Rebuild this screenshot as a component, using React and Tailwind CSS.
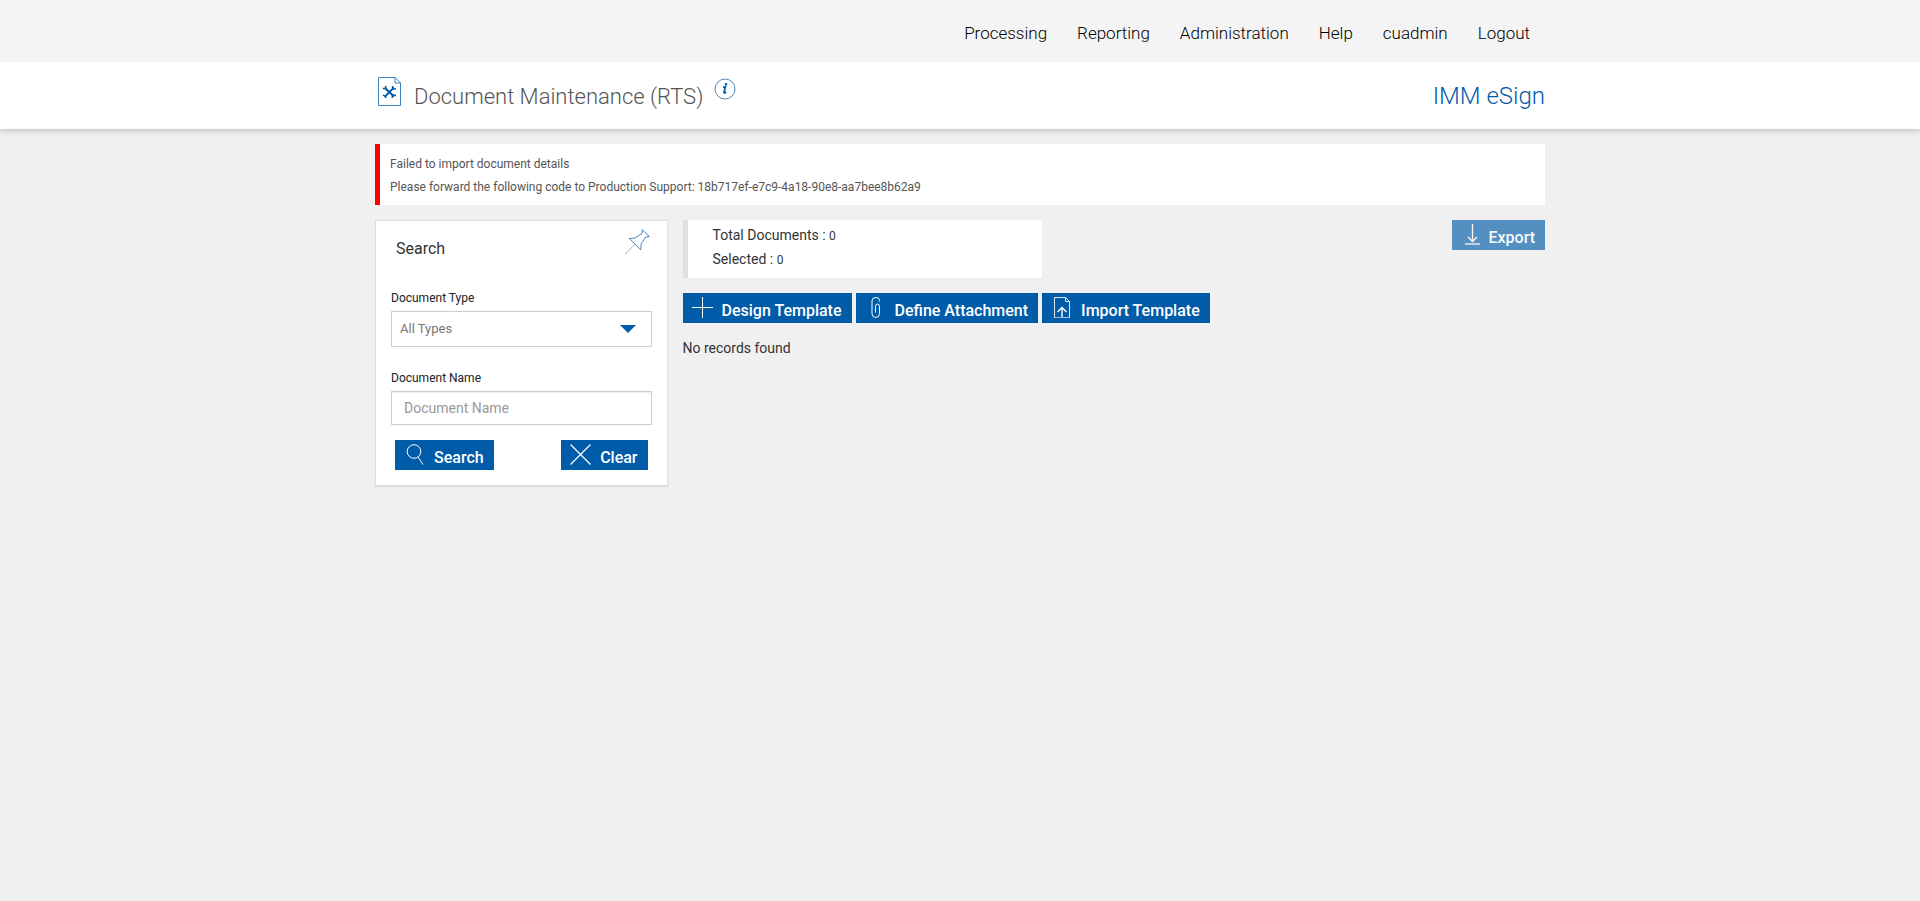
const navItems = ['Processing', 'Reporting', 'Administration', 'Help', 'cuadmin', 'Logout']

function ToolsDocIcon() {
  return (
    <svg className="w-[24px] h-[30px]" viewBox="0 0 24 30" fill="none" stroke="#005ca9">
      <path d="M0.5 0.5H17L22.5 6V28.5H0.5Z" strokeOpacity="0.75" />
      <path d="M17 0.5V6H22.5" strokeOpacity="0.75" />
      <path d="M7 11L16 19.5" strokeWidth="2.2" />
      <path d="M16 10.5L7 19.5" strokeWidth="1.8" />
      <path d="M4.8 11.5H7.6V9M13.8 20.8L15.2 18.4L18 18.6M14.4 9L15 11.8L18 12M5 17.8L8.4 20.8" strokeWidth="1.5" />
    </svg>
  )
}

function InfoIcon() {
  return (
    <svg className="w-[22px] h-[22px]" viewBox="0 0 22 22" fill="none">
      <circle cx="11" cy="11" r="10" stroke="#2b6a9f" strokeWidth="0.8" />
      <path d="M9 9.2Q10.6 9.2 11.4 8.8L10 14.4Q10 15.8 12.2 14" stroke="#005ca9" strokeWidth="1.7" />
      <circle cx="12" cy="6.3" r="1.2" fill="#005ca9" />
    </svg>
  )
}

function PinIcon() {
  return (
    <svg className="w-[26px] h-[26px]" viewBox="0 0 26 26" fill="none" stroke="#3a75ad" strokeWidth="0.9">
      <path d="M18.2 0.6L25.4 7.6L21.8 8L17.2 14.6L16.8 21L5.2 9.4L10.6 9.2L18.2 4.4Z" />
      <path d="M11 15.2L1.2 25" strokeOpacity="0.6" />
    </svg>
  )
}

function PlusIcon() {
  return (
    <svg className="w-[23px] h-[22px]" viewBox="0 0 23 22" fill="none" stroke="currentColor">
      <path d="M1 10.5H22M11.5 0V21" />
    </svg>
  )
}

function ClipIcon() {
  return (
    <svg className="w-[23px] h-[22px]" viewBox="0 0 23 22" fill="none" stroke="currentColor">
      <path d="M15.5 4.5V3.5Q15.5 0.5 12 0.5Q8 0.5 8 4V16.5Q8 20.5 11.8 20.5Q15.5 20.5 15.5 16.5V9.5Q15.5 7 13.5 7Q11.5 7 11.5 9.5V15.5" />
    </svg>
  )
}

function ImportIcon() {
  return (
    <svg className="w-[23px] h-[22px]" viewBox="0 0 23 22" fill="none" stroke="currentColor">
      <path d="M4.5 20.5V0.5H15.5L19.5 4.5V20.5" strokeOpacity="0.85" />
      <path d="M15.5 0.5V4.5H19.5" strokeOpacity="0.85" />
      <path d="M4 20.5H20" strokeOpacity="0.6" />
      <path d="M12 20V11M7.5 15L12 10.5L16.5 15" strokeWidth="1.4" />
    </svg>
  )
}

function ExportIcon() {
  return (
    <svg className="w-[20px] h-[22px]" viewBox="0 0 20 22" fill="none" stroke="currentColor">
      <path d="M12.5 0V17M8 13L12.5 17.5L17 13" strokeWidth="1.3" />
      <path d="M5 20H20" strokeWidth="1.3" />
    </svg>
  )
}

function SearchIcon() {
  return (
    <svg className="w-[23px] h-[22px]" viewBox="0 0 23 22" fill="none" stroke="currentColor">
      <circle cx="11" cy="7.5" r="6.8" />
      <path d="M15 13L20 20.5" />
    </svg>
  )
}

function CloseIcon() {
  return (
    <svg className="w-[23px] h-[22px]" viewBox="0 0 23 22" fill="none" stroke="currentColor" strokeWidth="1.2">
      <path d="M1.5 0.5L21.5 20.5M21.5 0.5L1.5 20.5" />
    </svg>
  )
}

function ActionButton({ icon, children, disabled = false }) {
  return (
    <button
      type="button"
      disabled={disabled}
      className="h-[30px] pl-2 pr-[10px] flex items-start gap-2 bg-[#005ca9] text-white text-base font-medium disabled:opacity-65"
    >
      <span className="pt-1">{icon}</span>
      <span className="pt-[6px] leading-6">{children}</span>
    </button>
  )
}

function SearchPanel() {
  return (
    <form className="w-full md:w-1/4 shrink-0 bg-white border border-[#dedede] shadow-[0_1px_1px_rgba(0,0,0,0.08)] px-[15px] pb-[15px]">
      <div className="flex items-start justify-between pt-2 pl-[5px] pr-[2px]">
        <h2 className="text-base text-[#333333] pt-2">Search</h2>
        <button type="button" aria-label="Pin search panel">
          <PinIcon />
        </button>
      </div>

      <label htmlFor="docType" className="block mt-[29px] text-xs leading-4 text-[#222222]">Document Type</label>
      <div className="relative mt-[5px]">
        <select id="docType" className="appearance-none block w-full h-9 pl-2 border border-[#cccccc] bg-white text-[13px] text-[#777777]">
          <option>All Types</option>
        </select>
        <svg className="absolute right-4 top-[14px] w-4 h-2 pointer-events-none" viewBox="0 0 16 8" fill="#005ca9">
          <path d="M0 0H16L8 8Z" />
        </svg>
      </div>

      <label htmlFor="docName" className="block mt-[23px] text-xs leading-4 text-[#222222]">Document Name</label>
      <input
        id="docName"
        type="text"
        placeholder="Document Name"
        className="block w-full h-[34px] mt-[5px] px-3 border border-[#cccccc] bg-white text-sm shadow-[inset_0_1px_1px_rgba(0,0,0,0.075)] placeholder:text-[#999999]"
      />

      <div className="flex justify-between mt-[15px] px-1">
        <ActionButton icon={<SearchIcon />}>Search</ActionButton>
        <ActionButton icon={<CloseIcon />}>Clear</ActionButton>
      </div>
    </form>
  )
}

export default function App() {
  return (
    <div className="min-h-screen bg-[#f0f0f0] font-[Roboto,sans-serif] text-[#333333]">
      <nav className="relative z-10 bg-[#f4f4f4]">
        <ul className="max-w-[1170px] mx-auto min-h-[62px] flex flex-wrap items-center justify-end pt-[5px]">
          {navItems.map((item) => (
            <li key={item}>
              <a href="#" className="px-[15px] text-[17px] font-light text-black">{item}</a>
            </li>
          ))}
        </ul>
      </nav>

      <header className="relative bg-white shadow-[0_1px_6px_rgba(0,0,0,0.25)]">
        <div className="max-w-[1170px] mx-auto min-h-[67px] flex items-start justify-between">
          <div className="flex items-start pl-[3px] pt-[15px]">
            <ToolsDocIcon />
            <h1 className="ml-3 pt-[5px] text-[22px] leading-[30px] font-light text-[#555555]">Document Maintenance (RTS)</h1>
            <button type="button" aria-label="Information" className="ml-[11px] pt-[1px]">
              <InfoIcon />
            </button>
          </div>
          <span className="pt-[19px] text-2xl leading-[30px] font-light text-[#005ca9]">IMM eSign</span>
        </div>
      </header>

      <main className="max-w-[1170px] mx-auto pt-[15px]">
        <div role="alert" className="bg-white border-l-[5px] border-[#ff0000] px-[10px] pt-[9px] pb-[7px] text-xs text-[#555555]">
          <p className="leading-[23px]">Failed to import document details</p>
          <p className="leading-[22px]">Please forward the following code to Production Support: 18b717ef-e7c9-4a18-90e8-aa7bee8b62a9</p>
        </div>

        <div className="flex flex-wrap md:flex-nowrap items-start gap-[15px] mt-[15px]">
          <SearchPanel />

          <section className="grow">
            <div className="flex items-start justify-between">
              <div className="w-[359px] bg-white border-l-[5px] border-[#e0e0e0] pl-[25px] pt-[3px] pb-[7px] text-sm leading-6">
                <p>Total Documents : <span className="text-xs">0</span></p>
                <p>Selected : <span className="text-xs">0</span></p>
              </div>
              <ActionButton icon={<ExportIcon />} disabled>Export</ActionButton>
            </div>

            <div className="flex flex-wrap gap-1 mt-[15px]">
              <ActionButton icon={<PlusIcon />}>Design Template</ActionButton>
              <ActionButton icon={<ClipIcon />}>Define Attachment</ActionButton>
              <ActionButton icon={<ImportIcon />}>Import Template</ActionButton>
            </div>

            <p className="mt-[15px] text-sm">No records found</p>
          </section>
        </div>
      </main>
    </div>
  )
}
